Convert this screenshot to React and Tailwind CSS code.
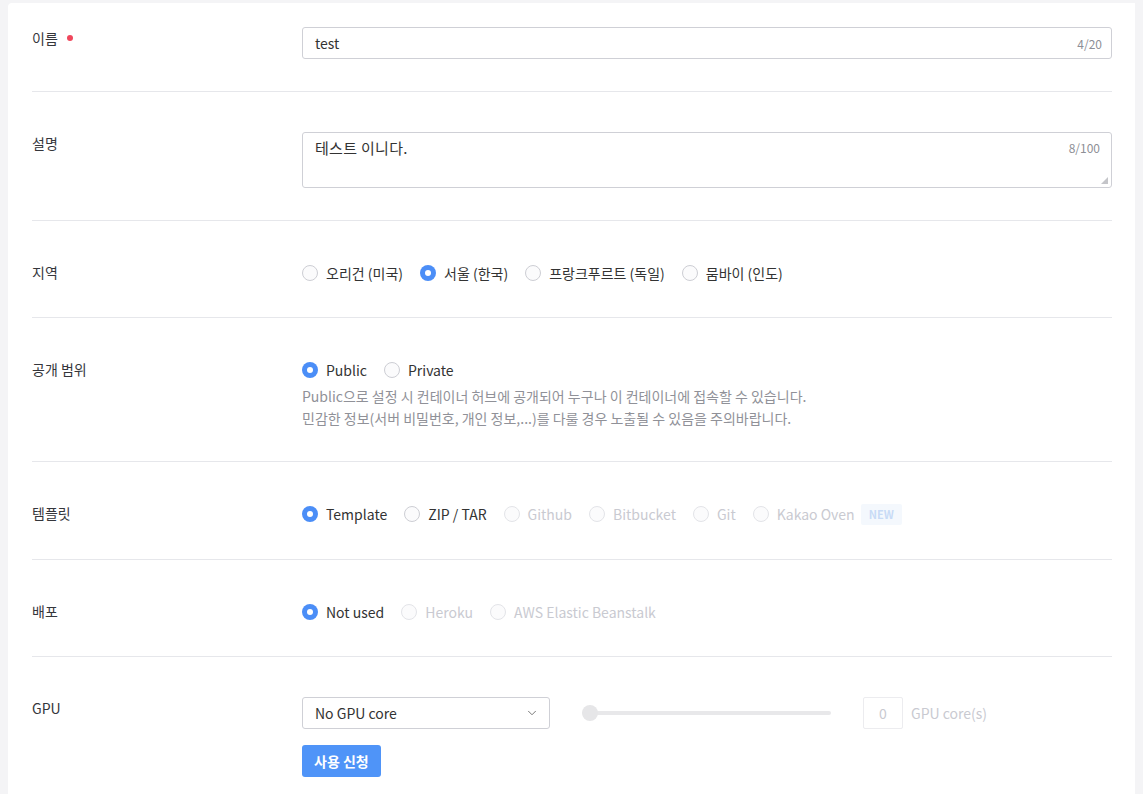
import { ChevronDown } from 'lucide-react';

const FONT = { fontFamily: '"Noto Sans CJK KR", "Noto Sans", sans-serif' };

const Radio = ({ label, checked, disabled }) => (
    <label className="flex items-center gap-2 mr-[17px] h-6">
        <span
            className={`w-4 h-4 rounded-full flex items-center justify-center shrink-0 ${checked
                ? 'bg-[#4b8ef7]'
                : disabled
                    ? 'border border-[#e3e4e8] bg-[#fbfbfc]'
                    : 'border border-[#cdced4] bg-[#fbfbfc]'
                }`}
        >
            {checked && <span className="w-[6px] h-[6px] rounded-full bg-white" />}
        </span>
        <span className={`text-[14px] ${disabled ? 'text-[#c9cad1]' : 'text-[#333]'}`}>{label}</span>
    </label>
);

const Row = ({ label, required, first, last, extra = 'pb-8', children }) => (
    <div className={`flex ${first ? 'pt-6' : 'pt-10'} ${extra} ${last ? '' : 'border-b border-[#e6e7eb]'}`}>
        <div className="w-[270px] shrink-0 text-[14px] text-[#35363b] leading-[22px] flex items-start">
            {label}
            {required && <span className="ml-[9px] mt-[8px] w-[6px] h-[6px] rounded-full bg-[#f0475c]" />}
        </div>
        <div className="flex-1">{children}</div>
    </div>
);

export default function App() {
    return (
        <div className="min-h-screen bg-[#f4f4f6] pl-2 pr-2 pt-[3px]" style={FONT}>
            <div className="bg-white rounded-tl-[4px] h-[791px] pl-6 pr-[23px] overflow-hidden">
                <Row label="이름" required first>
                    <div className="relative h-8 border border-[#cfd0d6] rounded-[3px] flex items-center px-3">
                        <span className="text-[14px] text-[#333]">test</span>
                        <span className="absolute right-[9px] top-[7px] text-[12px] text-[#8e8f96]">4/20</span>
                    </div>
                </Row>
                <Row label="설명">
                    <div className="relative h-14 border border-[#cfd0d6] rounded-[3px] px-3 pt-[2px]">
                        <span className="text-[15px] text-[#333] tracking-[0.3px]">테스트 이니다.</span>
                        <span className="absolute right-[11px] top-[6px] text-[12px] text-[#8e8f96]">8/100</span>
                        <svg className="absolute right-[3px] bottom-[3px]" width="7" height="7" viewBox="0 0 7 7">
                            <path d="M7 0 L7 7 L0 7 Z" fill="#c4c5c9" />
                        </svg>
                    </div>
                </Row>
                <Row label="지역">
                    <div className="flex items-center">
                        <Radio label="오리건 (미국)" />
                        <Radio label="서울 (한국)" checked />
                        <Radio label="프랑크푸르트 (독일)" />
                        <Radio label="뭄바이 (인도)" />
                    </div>
                </Row>
                <Row label="공개 범위">
                    <div className="flex items-center">
                        <Radio label="Public" checked />
                        <Radio label="Private" />
                    </div>
                    <div className="mt-[3px] text-[14px] leading-[22px] text-[#909198]">
                        <p>Public으로 설정 시 컨테이너 허브에 공개되어 누구나 이 컨테이너에 접속할 수 있습니다.</p>
                        <p>민감한 정보(서버 비밀번호, 개인 정보,...)를 다룰 경우 노출될 수 있음을 주의바랍니다.</p>
                    </div>
                </Row>
                <Row label="템플릿" extra="pb-[33px]">
                    <div className="flex items-center">
                        <Radio label="Template" checked />
                        <Radio label="ZIP / TAR" />
                        <Radio label="Github" disabled />
                        <Radio label="Bitbucket" disabled />
                        <Radio label="Git" disabled />
                        <label className="flex items-center gap-2 h-6">
                            <span className="w-4 h-4 rounded-full border border-[#e3e4e8] bg-[#fbfbfc]" />
                            <span className="text-[14px] text-[#c9cad1]">Kakao Oven</span>
                            <span className="ml-[-2px] px-2 h-[21px] flex items-center bg-[#f4f8fd] text-[11px] font-bold text-[#c8dbf6] rounded-[2px]">NEW</span>
                        </label>
                    </div>
                </Row>
                <Row label="배포">
                    <div className="flex items-center">
                        <Radio label="Not used" checked />
                        <Radio label="Heroku" disabled />
                        <Radio label="AWS Elastic Beanstalk" disabled />
                    </div>
                </Row>
                <Row label="GPU" last>
                    <div className="flex items-center">
                        <div className="w-[248px] h-8 border border-[#cfd0d6] rounded-[3px] flex items-center justify-between pl-3 pr-[10px]">
                            <span className="text-[14px] text-[#333]">No GPU core</span>
                            <ChevronDown size={14} strokeWidth={1.5} className="text-[#666]" />
                        </div>
                        <div className="ml-8 w-[249px] h-4 relative flex items-center">
                            <div className="w-full h-[4px] rounded-full bg-[#e8e8ea]" />
                            <div className="absolute left-0 top-0 w-4 h-4 rounded-full bg-[#e6e6e8]" />
                        </div>
                        <div className="ml-8 w-10 h-8 border border-[#ececef] rounded-[2px] flex items-center justify-center text-[14px] text-[#c9cad1]">0</div>
                        <span className="ml-2 text-[14px] text-[#c9cad1]">GPU core(s)</span>
                    </div>
                    <button className="mt-4 h-8 px-3 rounded-[3px] bg-[#4f94f8] text-white text-[14px] font-bold">사용 신청</button>
                </Row>
            </div>
        </div>
    );
}
